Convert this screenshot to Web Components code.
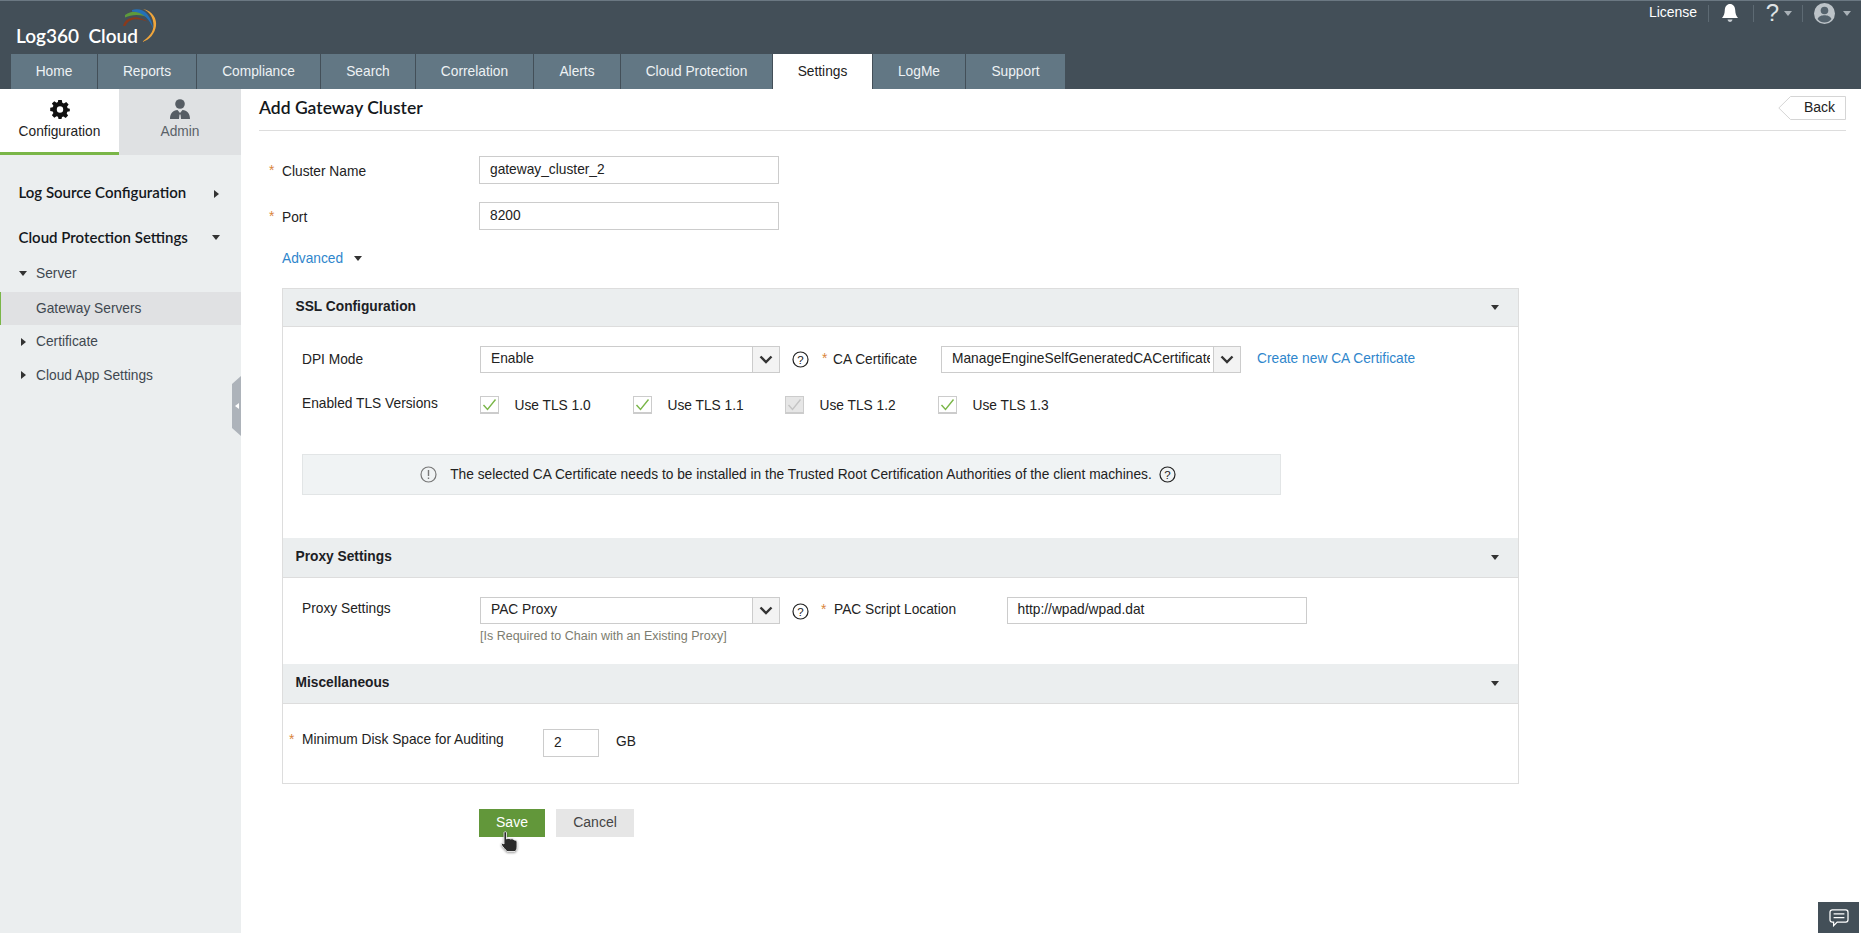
<!DOCTYPE html>
<html>
<head>
<meta charset="utf-8">
<title>Add Gateway Cluster</title>
<style>
html, body { margin: 0; height: 100%; }
body { font-family: "Liberation Sans", Arial, sans-serif; font-size: 13.75px; color: #222; overflow: hidden; }
</style>
</head>
<body>
<app-shell>
  <top-header slot="header"></top-header>
  <side-nav slot="side"></side-nav>
  <page-title slot="title" heading="Add Gateway Cluster"></page-title>
  <cluster-form slot="main"></cluster-form>
</app-shell>
<chat-badge></chat-badge>
<hand-cursor></hand-cursor>

<script>
const helpIcon = (size = 17) => `<svg width="${size}" height="${size}" viewBox="0 0 17 17" style="display:block"><circle cx="8.500" cy="8.500" r="7.500" fill="none" stroke="#222" stroke-width="1.200"/><text x="8.500" y="12.700" font-family="Liberation Sans" font-size="11.500" text-anchor="middle" fill="#222">?</text></svg>`;

class AppShell extends HTMLElement {
    constructor() {
        super();
        this.attachShadow({mode: 'open'});
        this.shadowRoot.innerHTML = `
            <style>
                :host { display: grid; grid-template-columns: 241px 1fr; grid-template-rows: 89px 1fr; height: 933px; }
                .head { grid-column: 1 / 3; }
                .side { background: #ebeeef; position: relative; }
                .main { padding: 0 15px 0 18px; min-width: 0; }
            </style>
            <div class="head"><slot name="header"></slot></div>
            <div class="side"><slot name="side"></slot></div>
            <div class="main"><slot name="title"></slot><slot name="main"></slot></div>
        `;
    }
}

class TopHeader extends HTMLElement {
    constructor() {
        super();
        this.attachShadow({mode: 'open'});
        const tabs = [['Home', 86], ['Reports', 98], ['Compliance', 123], ['Search', 94], ['Correlation', 117], ['Alerts', 86], ['Cloud Protection', 151], ['Settings', 99, 1], ['LogMe', 92], ['Support', 99]];
        this.shadowRoot.innerHTML = `
            <style>
                :host { display: block; height: 89px; background: #434f58; border-top: 1px solid #6b7882; box-sizing: border-box; color: #fff; }
                .top { height: 53px; display: flex; justify-content: space-between; }
                .logo { position: relative; width: 170px; padding: 23px 0 0 16px; box-sizing: border-box; font: 600 19px/24px Lato, sans-serif; color: #fff; white-space: pre; }
                .logo svg { position: absolute; left: 110px; top: -1px; }
                .tools { display: flex; align-items: flex-start; padding: 1px 10px 0 0; height: 22px; font-size: 14px; }
                .tool { display: flex; align-items: center; height: 20px; }
                .sep { width: 1px; height: 17px; background: #5d6a73; margin: 3px 0 0; }
                .caret { width: 0; height: 0; border: 4px solid transparent; border-top: 5px solid #a9b1b7; border-bottom: 0; margin-left: 5px; }
                nav { display: flex; padding-left: 11px; height: 35px; }
                nav span { background: #627784; color: #eef2f4; font-size: 13.75px; line-height: 35px; text-align: center; margin-right: 1px; box-sizing: border-box; }
                nav span.on { background: #fff; color: #222; }
            </style>
            <div class="top">
                <div class="logo">Log360  Cloud<svg width="50" height="46" viewBox="0 0 50 46">
                    <path d="M13 26C15 18 25 13 38 22C27 17 18 19 15.500 26Z" fill="#8a3a1c"/>
                    <path d="M15 15C22 10 32 10 39 18C32 14 22 14 15 17.500Z" fill="#5d9a3c"/>
                    <path d="M22 10C32 7 41 13 43.500 30C40 19 33 12 22 11.500Z" fill="#2470b8"/>
                    <path d="M33 9C43 11 47 19 46 26C45 33 40 40 32 42C39 37 43.500 32 43.500 25C43.500 18 40 12 33 9Z" fill="#f0a63c"/>
                </svg></div>
                <div class="tools">
                    <span class="tool" style="margin-right:11px">License</span><span class="sep"></span>
                    <span class="tool" style="margin:1px 14px 0 12px"><svg width="18" height="20" viewBox="0 0 18 20"><path d="M9 1C6 1 4 3.500 3.800 7C3.600 10.500 3 12.500 1 15H17C15 12.500 14.400 10.500 14.200 7C14 3.500 12 1 9 1Z" fill="#fff"/><path d="M6.500 16.500H11.500C11 18.300 10 19 9 19S7 18.300 6.500 16.500Z" fill="#c9cfd3"/></svg></span><span class="sep"></span>
                    <span class="tool" style="margin:1px 10px 0 11.500px;font-size:24px;font-weight:300;color:#dfe3e6">?<i class="caret"></i></span><span class="sep"></span>
                    <span class="tool" style="margin:1px 0 0 11px"><svg width="21" height="21" viewBox="0 0 21 21"><circle cx="10.500" cy="10.500" r="10.500" fill="#bcc3c8"/><circle cx="10.500" cy="7.500" r="3.800" fill="#55636d"/><path d="M3.500 16C5 12.800 8 12.200 10.500 12.200S16 12.800 17.500 16C15.800 18.500 13 19.500 10.500 19.500S5.200 18.500 3.500 16Z" fill="#55636d"/></svg><i class="caret" style="margin-left:8px"></i></span>
                </div>
            </div>
            <nav>${tabs.map(t => `<span style="width:${t[1]}px" class="${t[2] ? 'on' : ''}">${t[0]}</span>`).join('')}</nav>
        `;
    }
}

class SideNav extends HTMLElement {
    constructor() {
        super();
        this.attachShadow({mode: 'open'});
        this.shadowRoot.innerHTML = `
            <style>
                :host { display: block; color: #3f4850; }
                .tabs { display: flex; height: 66px; }
                .tab { flex: 0 0 119px; box-sizing: border-box; text-align: center; font-size: 13.75px; padding-top: 10px; background: #fff; color: #222; border-bottom: 3px solid #7ab648; }
                .tab.off { flex: 1; background: #dfe1e3; color: #5a6168; border: 0; }
                .tab svg { display: block; margin: 0 auto 5px; }
                .head { display: flex; align-items: center; height: 45px; padding-left: 18.500px; font: 600 15px/20px Lato, sans-serif; color: #14181c; }
                .head b { font-weight: inherit; width: 193.500px; }
                .item { display: flex; align-items: center; height: 33px; font-size: 13.75px; padding-left: 19px; }
                .item i { width: 17px; display: flex; }
                .item.on { background: #e0e1e3; box-shadow: inset 1px 0 0 #7ab648; }
                .right { width: 0; height: 0; margin-left: 2px; border-left: 5px solid #333; border-top: 4.500px solid transparent; border-bottom: 4.500px solid transparent; }
                .down { width: 0; height: 0; border-top: 5px solid #333; border-left: 4.500px solid transparent; border-right: 4.500px solid transparent; }
                .grip { position: absolute; right: 0; top: 287px; width: 9px; height: 60px; background: #adb3ba; clip-path: polygon(100% 0, 100% 100%, 0 calc(100% - 8px), 0 8px); display: flex; align-items: center; justify-content: center; }
                .grip i { border-right: 4px solid #fff; border-top: 3px solid transparent; border-bottom: 3px solid transparent; }
            </style>
            <div class="tabs">
                <div class="tab">
                    <svg width="20" height="20" viewBox="0 0 20 20"><path fill="#111" fill-rule="evenodd" d="M8.200 1H11.800L12.300 3.700L13.900 4.400L16.200 2.900L18.600 5.400L17 7.700L17.700 9.200L19.800 9.800V12.200L17.300 12.800L16.700 14.400L18.100 16.600L15.700 19L13.500 17.500L12 18.100L11.500 20H8.500L8 17.800L6.500 17.200L4.300 18.700L1.900 16.300L3.400 14.100L2.700 12.500L0.200 12V8.800L2.700 8.300L3.400 6.800L1.900 4.600L4.300 2.200L6.500 3.700L7.900 3.100ZM10 7.300A3.200 3.200 0 1 0 10 13.700A3.200 3.200 0 1 0 10 7.300Z"/></svg>
                    Configuration
                </div>
                <div class="tab off">
                    <svg width="20" height="20" viewBox="0 0 20 20"><circle cx="10" cy="5" r="4.800" fill="#565d64"/><path d="M0 20C0 14 3 11.500 7.500 11L10 14L12.500 11C17 11.500 20 14 20 20H11L10.500 15.500H9.500L9 20Z" fill="#565d64"/></svg>
                    Admin
                </div>
            </div>
            <div style="height:14px"></div>
            <div class="head"><b>Log Source Configuration</b><span class="right" style="margin-top:4px"></span></div>
            <div class="head"><b>Cloud Protection Settings</b><span class="down" style="margin-top:2px"></span></div>
            <div class="item" style="margin-top:-2px"><i><span class="down"></span></i>Server</div>
            <div class="item on" style="margin-top:2px"><i></i>Gateway Servers</div>
            <div class="item"><i><span class="right"></span></i>Certificate</div>
            <div class="item" style="height:34px"><i><span class="right"></span></i>Cloud App Settings</div>
            <div class="grip"><i></i></div>
        `;
    }
}

class PageTitle extends HTMLElement {
    constructor() {
        super();
        this.attachShadow({mode: 'open'});
        this.shadowRoot.innerHTML = `
            <style>
                :host { display: flex; justify-content: space-between; align-items: flex-start; height: 41px; border-bottom: 1px solid #ddd; box-sizing: content-box; }
                h1 { margin: 8px 0 0; font: 600 17.500px/22px Lato, sans-serif; color: #14181c; }
                .back { position: relative; margin: 7px 0 0; width: 68px; height: 24px; line-height: 23px; text-align: right; padding-right: 11px; box-sizing: border-box; font-size: 14px; }
                .back svg { position: absolute; left: 0; top: 0; }
                .back span { position: relative; }
            </style>
            <h1>${this.getAttribute('heading')}</h1>
            <div class="back"><svg width="68" height="24" viewBox="0 0 68 24" fill="#fff" stroke="#d5d5d5"><path d="M67.500 .5H12.500L.8 12L12.500 23.500H67.500Z"/></svg><span>Back</span></div>
        `;
    }
}

class TextField extends HTMLElement {
    constructor() {
        super();
        this.attachShadow({mode: 'open'});
        this.shadowRoot.innerHTML = `
            <style>
                :host { display: block; box-sizing: border-box; height: 28px; border: 1px solid #ccc; padding: 0 10px; line-height: 26px; font-size: 13.75px; color: #222; background: #fff; }
            </style>
            <slot></slot>
        `;
    }
}

class SelectBox extends HTMLElement {
    constructor() {
        super();
        this.attachShadow({mode: 'open'});
        this.shadowRoot.innerHTML = `
            <style>
                :host { display: flex; box-sizing: border-box; height: 27px; border: 1px solid #ccc; font-size: 13.75px; background: #fff; }
                .v { flex: 1; min-width: 0; margin-right: 3px; padding: 0 0 0 10px; line-height: 23px; white-space: nowrap; overflow: hidden; }
                .b { width: 26px; border-left: 1px solid #ccc; background: #f3f3f3; display: flex; align-items: center; justify-content: center; }
            </style>
            <div class="v"><slot></slot></div>
            <div class="b"><svg width="14" height="9" viewBox="0 0 14 9" fill="none"><path d="M1.500 1.500L7 7L12.500 1.500" stroke="#333" stroke-width="2.400"/></svg></div>
        `;
    }
}

class CheckOption extends HTMLElement {
    constructor() {
        super();
        this.attachShadow({mode: 'open'});
        const off = this.hasAttribute('disabled');
        this.shadowRoot.innerHTML = `
            <style>
                :host { display: flex; align-items: center; gap: 15.500px; font-size: 13.75px; height: 18px; }
                .box { width: 19px; height: 18px; box-sizing: border-box; border: 1px solid #ccc; border-bottom-width: 2px; background: ${off ? '#e6e6e6' : '#fff'}; display: flex; align-items: center; justify-content: center; }
            </style>
            <span class="box"><svg width="15" height="13" viewBox="0 0 15 13" fill="none"><path d="M1.500 7L5.500 11.500L13.500 1.500" stroke="${off ? '#c4c4c4' : '#7ab648'}" stroke-width="1.400"/></svg></span>
            <span><slot></slot></span>
        `;
    }
}

class SectionPanel extends HTMLElement {
    constructor() {
        super();
        this.attachShadow({mode: 'open'});
        this.shadowRoot.innerHTML = `
            <style>
                :host { display: block; }
                .h { display: flex; justify-content: space-between; align-items: center; box-sizing: border-box; height: var(--head, 39px); background: #ebeeef; border-bottom: 1px solid #ddd; padding: 0 19px 3px 12.500px; font-weight: bold; font-size: 13.75px; color: #1c2024; }
                .h i { border-top: 5px solid #333; border-left: 4.500px solid transparent; border-right: 4.500px solid transparent; margin-top: 3px; }
                .b { height: var(--body, 100px); box-sizing: border-box; }
            </style>
            <div class="h">${this.getAttribute('heading')}<i></i></div>
            <div class="b"><slot></slot></div>
        `;
    }
}

class ClusterForm extends HTMLElement {
    constructor() {
        super();
        this.attachShadow({mode: 'open'});
        this.shadowRoot.innerHTML = `
            <style>
                :host { display: block; font-size: 13.75px; color: #222; }
                .row { display: flex; align-items: flex-start; }
                .star { color: #d9863c; }
                .lab { position: relative; }
                .lab .star { position: absolute; left: -13px; top: 0; }
                .top-lab { width: 220px; padding-left: 23px; box-sizing: border-box; }
                a { color: #2f86cc; text-decoration: none; }
                .panel { width: 1237px; margin: 0 0 0 23px; border: 1px solid #ddd; box-sizing: border-box; }
                .pad { display: flex; align-items: flex-start; padding-left: 19px; }
                .caret { display: inline-block; border-top: 5px solid #333; border-left: 4.500px solid transparent; border-right: 4.500px solid transparent; margin-left: 11px; vertical-align: 2px; }
                .info { margin: 40px 0 0 19px; width: 979px; height: 41px; background: #f0f3f4; border: 1px solid #e2e5e6; box-sizing: border-box; display: flex; align-items: center; justify-content: center; gap: 13px; padding: 0 0 0 13px; }
                .hint { font-size: 12.500px; color: #7d7d70; }
                .btns { display: flex; gap: 11px; margin: 25px 0 0 220px; }
                .btns span { height: 28px; line-height: 27px; text-align: center; font-size: 14px; }
                .save { width: 66px; background: #62973a; color: #fff; }
                .cancel { width: 78px; background: #e6e6e6; color: #444; }
            </style>
            <div class="row" style="margin-top:25px;height:46px">
                <div class="top-lab lab" style="padding-top:8px"><span class="star" style="left:10px;top:7px">*</span>Cluster Name</div>
                <text-field style="width:300px">gateway_cluster_2</text-field>
            </div>
            <div class="row" style="height:46px">
                <div class="top-lab lab" style="padding-top:8px"><span class="star" style="left:10px;top:7px">*</span>Port</div>
                <text-field style="width:300px">8200</text-field>
            </div>
            <div style="padding:1px 0 0 23px;height:39px;line-height:20px"><a>Advanced</a><i class="caret"></i></div>
            <div class="panel">
                <section-panel heading="SSL Configuration" style="--head:38px;--body:211px">
                    <div class="pad" style="padding-top:19px;height:27px">
                        <span style="width:178px;padding-top:6px">DPI Mode</span>
                        <select-box style="width:300px">Enable</select-box>
                        <span style="margin:5px 0 0 12px">${helpIcon()}</span>
                        <span class="lab" style="margin:6px 0 0 24px;width:108px"><span class="star" style="left:-11px;top:-1px">*</span>CA Certificate</span>
                        <select-box style="width:300px">ManageEngineSelfGeneratedCACertificate</select-box>
                        <a style="margin:5px 0 0 16px">Create new CA Certificate</a>
                    </div>
                    <div class="pad" style="margin-top:23px;height:18px">
                        <span style="width:178px">Enabled TLS Versions</span>
                        <check-option style="width:153px">Use TLS 1.0</check-option>
                        <check-option style="width:152px">Use TLS 1.1</check-option>
                        <check-option disabled style="width:153px">Use TLS 1.2</check-option>
                        <check-option>Use TLS 1.3</check-option>
                    </div>
                    <div class="info">
                        <svg width="17" height="17" viewBox="0 0 17 17"><circle cx="8.500" cy="8.500" r="7.500" fill="none" stroke="#777" stroke-width="1.200"/><path d="M8.500 4V10M8.500 11.500V13" stroke="#777" stroke-width="1.400"/></svg>
                        <span style="display:flex;align-items:center;gap:7px">The selected CA Certificate needs to be installed in the Trusted Root Certification Authorities of the client machines. ${helpIcon()}</span>
                    </div>
                </section-panel>
                <section-panel heading="Proxy Settings" style="--head:40px;--body:86px">
                    <div class="pad" style="padding-top:19px">
                        <span style="width:178px;padding-top:4px">Proxy Settings</span>
                        <div style="width:300px">
                            <select-box>PAC Proxy</select-box>
                            <div class="hint" style="margin-top:5px">[Is Required to Chain with an Existing Proxy]</div>
                        </div>
                        <span style="margin:6px 0 0 12px">${helpIcon()}</span>
                        <span class="lab" style="margin:5px 0 0 25px;width:172.500px"><span class="star" style="left:-13px;top:0">*</span>PAC Script Location</span>
                        <text-field style="width:300px;height:27px;line-height:24px">http://wpad/wpad.dat</text-field>
                    </div>
                </section-panel>
                <section-panel heading="Miscellaneous" style="--head:40px;--body:79px">
                    <div class="pad" style="padding-top:25px">
                        <span class="lab" style="width:241px;padding-top:3px"><span class="star" style="left:-13px;top:3px">*</span>Minimum Disk Space for Auditing</span>
                        <text-field style="width:56px">2</text-field>
                        <span style="margin:5px 0 0 17px">GB</span>
                    </div>
                </section-panel>
            </div>
            <div class="btns"><span class="save">Save</span><span class="cancel">Cancel</span></div>
        `;
    }
}

class ChatBadge extends HTMLElement {
    constructor() {
        super();
        this.attachShadow({mode: 'open'});
        this.shadowRoot.innerHTML = `
            <style>
                :host { position: fixed; right: 2px; bottom: 0; width: 41px; height: 31px; background: #434f58; display: flex; align-items: center; justify-content: center; }
            </style>
            <svg width="20" height="18" viewBox="0 0 22 20" fill="none" stroke="#fff" stroke-width="1.400"><path d="M3.500 1H18.500C20 1 21 2 21 3.500V12C21 13.500 20 14.500 18.500 14.500H9L5 18.500V14.500H3.500C2 14.500 1 13.500 1 12V3.500C1 2 2 1 3.500 1Z"/><path d="M5 5.500H17M5 9.500H17"/></svg>
        `;
    }
}

class HandCursor extends HTMLElement {
    constructor() {
        super();
        this.attachShadow({mode: 'open'});
        this.shadowRoot.innerHTML = `
            <style>
                :host { position: fixed; left: 500px; top: 831px; width: 20px; height: 22px; filter: drop-shadow(0 1px 1px rgba(0,0,0,.4)); }
            </style>
            <svg width="20" height="22" viewBox="0 0 20 22"><path d="M4 1.500C4 .5 6.500 .5 6.500 1.500V8C8 7 10 7.500 10.500 8C12 7.500 13.500 8 14 9C15.500 8.700 17 9.500 17 11V16C17 18 16 19.500 15 20.500H7C6 19 3 16.500 1.500 14C1 12.500 2.500 11.500 4 13Z" fill="#2b2b2b" stroke="#fff" stroke-width=".8"/></svg>
        `;
    }
}

customElements.define('app-shell', AppShell);
customElements.define('top-header', TopHeader);
customElements.define('side-nav', SideNav);
customElements.define('page-title', PageTitle);
customElements.define('text-field', TextField);
customElements.define('select-box', SelectBox);
customElements.define('check-option', CheckOption);
customElements.define('section-panel', SectionPanel);
customElements.define('cluster-form', ClusterForm);
customElements.define('chat-badge', ChatBadge);
customElements.define('hand-cursor', HandCursor);
</script>
</body>
</html>
